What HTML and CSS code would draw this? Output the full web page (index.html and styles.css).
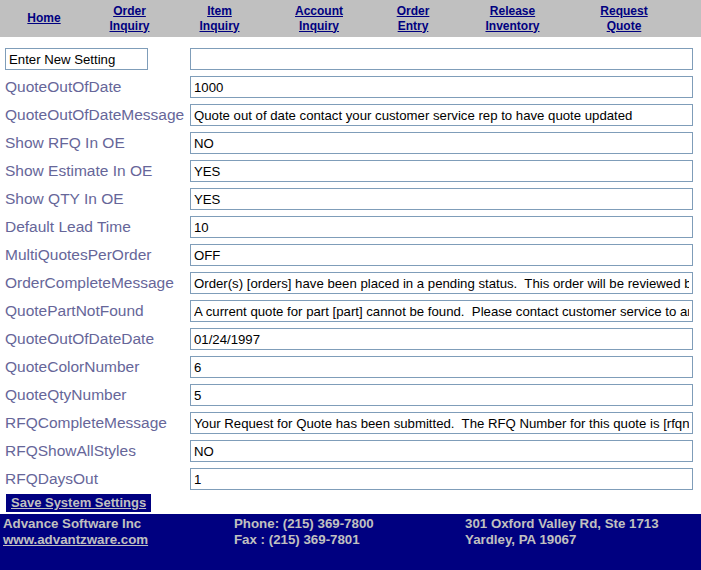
FILE: index.html
```html
<!DOCTYPE html>
<html>
<head>
<meta charset="utf-8">
<title>System Settings</title>
<link rel="stylesheet" href="styles.css">
</head>
<body>
<div class="nav">
  <a href="#">Home</a>
  <a href="#">Order<br>Inquiry</a>
  <a href="#">Item<br>Inquiry</a>
  <a href="#">Account<br>Inquiry</a>
  <a href="#">Order<br>Entry</a>
  <a href="#">Release<br>Inventory</a>
  <a href="#">Request<br>Quote</a>
</div>

<form class="settings">
  <div class="cell"><input class="field new-name" type="text" value="Enter New Setting"></div>
  <div class="cell"><input class="field wide" type="text" value=""></div>

  <label class="label">QuoteOutOfDate</label>
  <input class="field wide" type="text" value="1000">

  <label class="label">QuoteOutOfDateMessage</label>
  <input class="field wide" type="text" value="Quote out of date contact your customer service rep to have quote updated">

  <label class="label">Show RFQ In OE</label>
  <input class="field wide" type="text" value="NO">

  <label class="label">Show Estimate In OE</label>
  <input class="field wide" type="text" value="YES">

  <label class="label">Show QTY In OE</label>
  <input class="field wide" type="text" value="YES">

  <label class="label">Default Lead Time</label>
  <input class="field wide" type="text" value="10">

  <label class="label">MultiQuotesPerOrder</label>
  <input class="field wide" type="text" value="OFF">

  <label class="label">OrderCompleteMessage</label>
  <input class="field wide" type="text" value="Order(s) [orders] have been placed in a pending status.  This order will be reviewed by customer service">

  <label class="label">QuotePartNotFound</label>
  <input class="field wide" type="text" value="A current quote for part [part] cannot be found.  Please contact customer service to arrange a quote">

  <label class="label">QuoteOutOfDateDate</label>
  <input class="field wide" type="text" value="01/24/1997">

  <label class="label">QuoteColorNumber</label>
  <input class="field wide" type="text" value="6">

  <label class="label">QuoteQtyNumber</label>
  <input class="field wide" type="text" value="5">

  <label class="label">RFQCompleteMessage</label>
  <input class="field wide" type="text" value="Your Request for Quote has been submitted.  The RFQ Number for this quote is [rfqnumber]">

  <label class="label">RFQShowAllStyles</label>
  <input class="field wide" type="text" value="NO">

  <label class="label">RFQDaysOut</label>
  <input class="field wide" type="text" value="1">
</form>

<div class="save-row">
  <a href="#" class="save-btn">Save System Settings</a>
</div>

<div class="footer">
  <div class="fcol">
    <div>Advance Software Inc</div>
    <div><a href="#">www.advantzware.com</a></div>
  </div>
  <div class="fcol">
    <div>Phone: (215) 369-7800</div>
    <div>Fax : (215) 369-7801</div>
  </div>
  <div class="fcol">
    <div>301 Oxford Valley Rd, Ste 1713</div>
    <div>Yardley, PA 19067</div>
  </div>
</div>
</body>
</html>
```

FILE: styles.css
```css
html, body {
  margin: 0;
  padding: 0;
  background: #ffffff;
  font-family: "Liberation Sans", Arial, sans-serif;
}

.nav {
  background: #c0c0c0;
  height: 37px;
  display: grid;
  grid-template-columns: 88px 83px 97px 102px 86px 113px 110px;
  align-items: center;
  justify-items: center;
}

.nav a {
  font-weight: bold;
  font-size: 12px;
  line-height: 15px;
  color: #000080;
  text-decoration: underline;
  text-align: center;
}

.settings {
  margin: 0;
  padding: 11px 0 0 5px;
  display: grid;
  grid-template-columns: 185px 503px;
  row-gap: 6px;
  align-items: center;
}

.cell {
  display: flex;
}

.label {
  font-size: 15.5px;
  color: #666699;
  white-space: nowrap;
  line-height: 18px;
}

.field {
  box-sizing: border-box;
  height: 22px;
  margin: 0;
  padding: 0 3px;
  border: 1px solid #7f9db9;
  font-family: "Liberation Sans", Arial, sans-serif;
  font-size: 13.2px;
  color: #000000;
  background: #ffffff;
  outline: none;
}

.new-name {
  width: 143px;
}

.wide {
  width: 503px;
}

.save-row {
  padding: 4px 0 0 6px;
  display: flex;
}

.save-btn {
  box-sizing: border-box;
  width: 145px;
  height: 18px;
  padding-left: 5px;
  background: #000080;
  color: #c0c0c0;
  font-weight: bold;
  font-size: 13px;
  line-height: 18px;
  text-decoration: underline;
  white-space: nowrap;
}

.footer {
  margin-top: 2px;
  box-sizing: border-box;
  height: 56px;
  padding: 2px 0 0 3px;
  background: #000080;
  display: grid;
  grid-template-columns: 231px 231px 231px;
  color: #c0c0c0;
  font-weight: bold;
  font-size: 13.3px;
  line-height: 16px;
}

.footer a {
  color: #c0c0c0;
  text-decoration: underline;
}
```
